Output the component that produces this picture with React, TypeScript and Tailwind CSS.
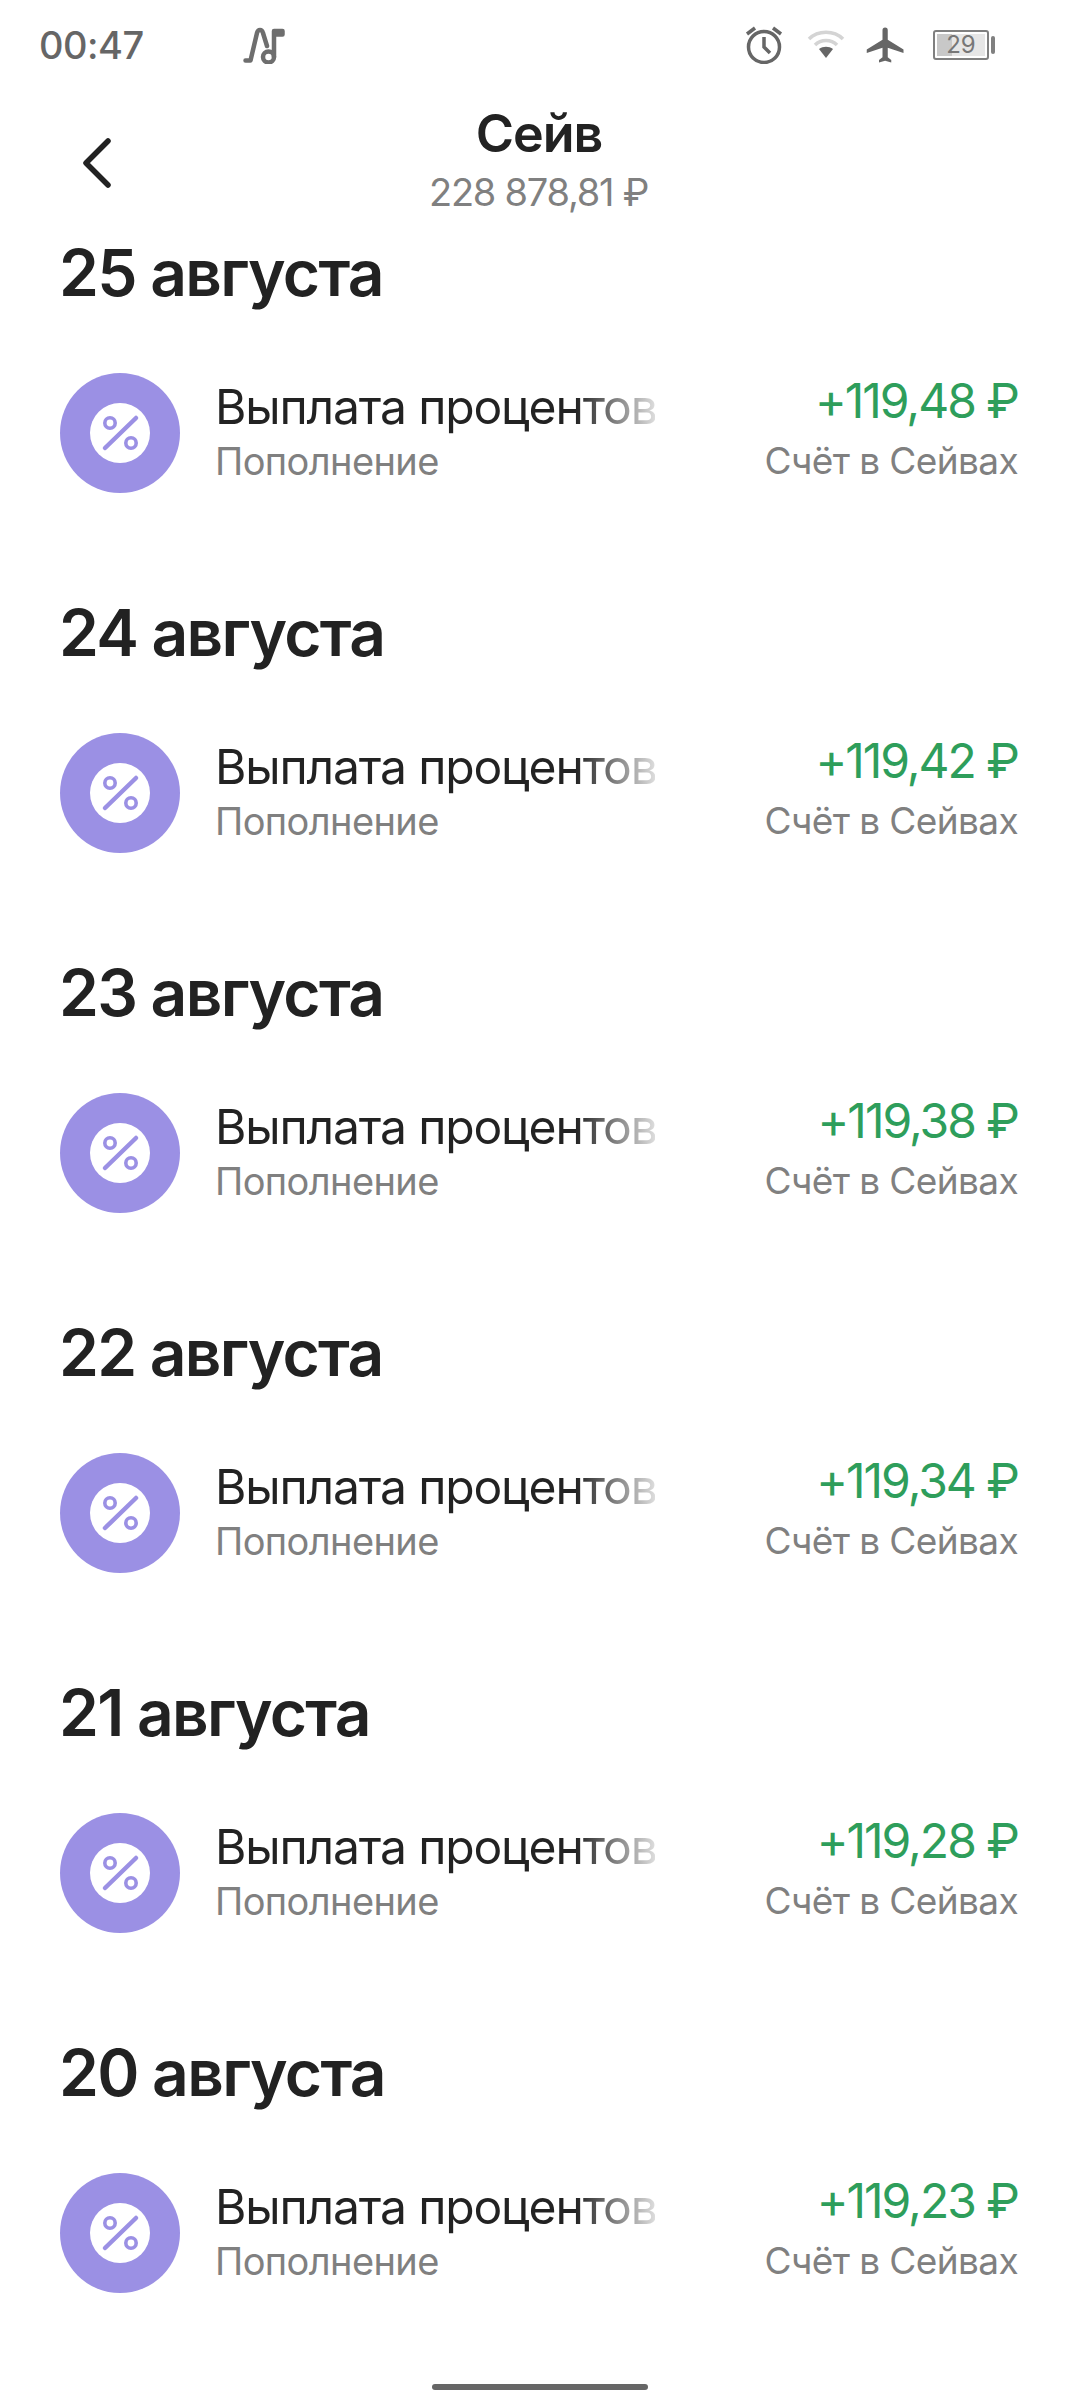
const days = [
  ["25 августа", "+119,48 ₽"],
  ["24 августа", "+119,42 ₽"],
  ["23 августа", "+119,38 ₽"],
  ["22 августа", "+119,34 ₽"],
  ["21 августа", "+119,28 ₽"],
  ["20 августа", "+119,23 ₽"],
];

function Percent() {
  return (
    <div className="flex h-[120px] w-[120px] shrink-0 items-center justify-center rounded-full bg-[#9b90e4]">
      <svg width="60" height="60" viewBox="0 0 60 60">
        <circle cx="30" cy="30" r="30" fill="#fff" />
        <path d="M15 45 L46 15" stroke="#9b90e4" strokeWidth="4.5" strokeLinecap="round" />
        <circle cx="20" cy="20" r="5.2" fill="none" stroke="#9b90e4" strokeWidth="3.6" />
        <circle cx="41" cy="40" r="5.2" fill="none" stroke="#9b90e4" strokeWidth="3.6" />
      </svg>
    </div>
  );
}

function Day({ date, amount }: { date: string; amount: string }) {
  return (
    <section className="h-[360px]">
      <h2 className="-ml-[1px] h-[66px] text-[64px] leading-[66px] font-semibold tracking-[-1.7px] text-[#222]">{date}</h2>
      <div className="mt-[66px] flex items-center">
        <Percent />
        <div className="ml-[35px] w-[440px] shrink-0 pb-[4px]">
          <div className="bg-[linear-gradient(90deg,#222_0,#222_360px,#ddd_440px)] bg-clip-text text-[48px] leading-[58px] tracking-[-1.15px] whitespace-nowrap text-transparent">
            Выплата процентов
          </div>
          <div className="mt-[2px] text-[38px] leading-[46px] tracking-[-0.6px] text-[#808080]">Пополнение</div>
        </div>
        <div className="flex-1 pr-[2px] pb-[10px] text-right">
          <div className="text-[48px] leading-[58px] tracking-[-2px] text-[#2e9e5b]">{amount}</div>
          <div className="mt-[8px] text-[37px] leading-[46px] tracking-[-0.6px] whitespace-nowrap text-[#808080]">Счёт в Сейвах</div>
        </div>
      </div>
    </section>
  );
}

export default function App() {
  return (
    <div className="relative h-[2408px] w-[1080px] overflow-hidden bg-white font-['Inter',sans-serif]">
      <div className="flex h-[90px] items-center pr-[85px] pl-[39px] text-[#666]">
        <span className="text-[38px] font-medium tracking-[-0.5px]">00:47</span>
        <svg className="ml-[99px]" width="42" height="38" viewBox="0 0 42 38" fill="none" stroke="#6e6e6e" strokeWidth="4.5" strokeLinecap="round" strokeLinejoin="round">
          <path d="M2.500 34.500h5L14 7c1-4 5-4 6 0l4 13" />
          <path d="M31 31V5h8.500v3.500h-8" />
          <circle cx="25.500" cy="31" r="5.500" />
        </svg>
        <div className="ml-auto flex items-center">
          <svg width="38" height="38" viewBox="0 0 38 38" fill="none" stroke="#666" strokeWidth="3.500">
            <circle cx="19" cy="21" r="15.500" />
            <path d="M19 11v10l6 6M2 8l8-6M36 8l-8-6" />
          </svg>
          <svg className="ml-[24px]" width="38" height="30" viewBox="0 0 38 30" fill="none" strokeWidth="3.500">
            <path d="M2 9C11 0 27 0 36 9" stroke="#d4d4d4" />
            <path d="M8 15c6-6 16-6 22 0" stroke="#d4d4d4" />
            <path d="M12 19c4-3 10-3 14 0l-7 9z" fill="#666" stroke="none" />
          </svg>
          <svg className="ml-[20px]" width="42" height="42" viewBox="0 0 24 24" fill="#666">
            <path d="M22 16.500v-2l-9-5.500V3.500a1.500 1.500 0 0 0-3 0V9l-9 5.500v2l9-3V19l-2 1.500V22l3.500-1 3.500 1v-1.500L13 19v-5.500z" />
          </svg>
          <div className="ml-[26px] flex items-center gap-[2px]">
            <div className="relative flex h-[30px] w-[56px] items-center justify-center rounded-[3px] border-[2px] border-[#808080] bg-[linear-gradient(90deg,#c8c8c8_0,#c8c8c8_32%,#e6e6e6_32%,#e6e6e6_100%)] bg-clip-content p-[2px] text-[24px] leading-none text-[#777]">
              29
            </div>
            <div className="h-[18px] w-[4px] rounded-[2px] bg-[#808080]" />
          </div>
        </div>
      </div>
      <header className="relative h-[150px] text-center">
        <svg className="absolute top-[47px] left-[80px]" width="34" height="54" viewBox="0 0 34 54" fill="none" stroke="#222" strokeWidth="5.500" strokeLinecap="round" strokeLinejoin="round">
          <path d="M28 4 6 26l22 22" />
        </svg>
        <div className="-ml-[2px] pt-[14px] text-[52px] leading-[60px] font-semibold tracking-[-1px] text-[#222]">Сейв</div>
        <div className="-ml-[3px] pt-[6px] text-[38px] leading-[44px] tracking-[-1.25px] text-[#808080]">228 878,81 ₽</div>
      </header>
      <main className="px-[60px]">
        {days.map(([d, a]) => (
          <Day key={d} date={d} amount={a} />
        ))}
      </main>
      <div className="absolute bottom-[18px] left-[432px] h-[6px] w-[216px] rounded-full bg-[#666]" />
    </div>
  );
}
